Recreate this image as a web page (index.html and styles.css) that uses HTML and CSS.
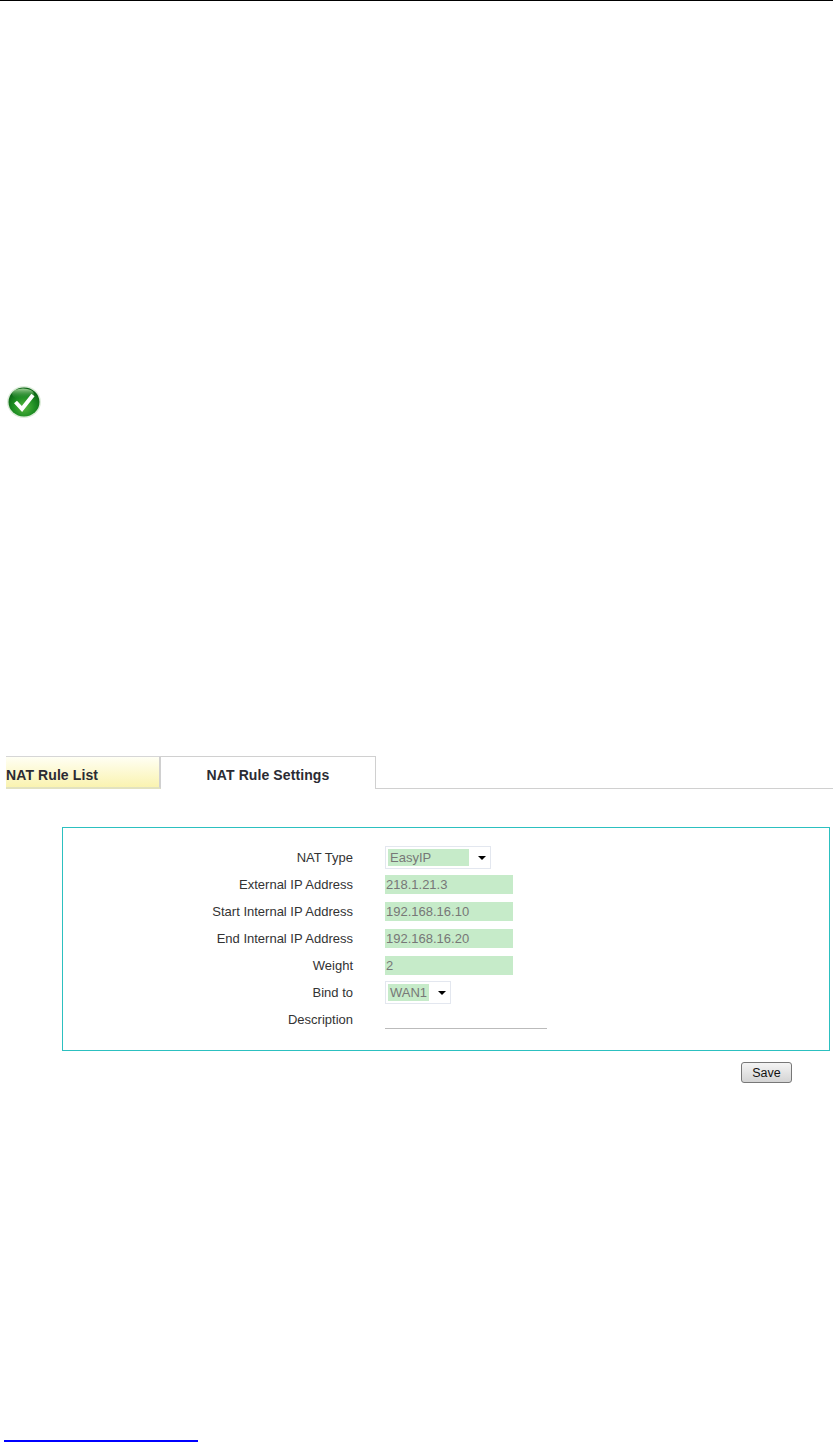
FILE: index.html
```html
<!DOCTYPE html>
<html lang="en">
<head>
<meta charset="utf-8">
<title>NAT Rule Settings</title>
<link rel="stylesheet" href="styles.css">
</head>
<body>
<div class="top-rule"></div>
<svg class="ok-icon" width="34" height="32" viewBox="0 0 34 32" aria-hidden="true">
  <defs>
    <radialGradient id="g" cx="50%" cy="68%" r="62%">
      <stop offset="0" stop-color="#58b83f"/>
      <stop offset="0.55" stop-color="#1f8f24"/>
      <stop offset="1" stop-color="#0a6314"/>
    </radialGradient>
    <linearGradient id="s" x1="0" y1="0" x2="0" y2="1">
      <stop offset="0" stop-color="#a5d59b"/>
      <stop offset="1" stop-color="#1f8c28" stop-opacity="0"/>
    </linearGradient>
  </defs>
  <ellipse cx="17" cy="16" rx="17" ry="16" fill="#dcecd9"/>
  <ellipse cx="17" cy="16" rx="15.5" ry="14.5" fill="url(#g)"/>
  <ellipse cx="16" cy="8" rx="11" ry="5.5" fill="url(#s)"/>
  <path d="M8.5 16l6.5 7L26 9" fill="none" stroke="#fff" stroke-width="4" stroke-linejoin="miter"/>
</svg>
<nav class="tabs">
  <div class="tab tab-off">NAT Rule List</div>
  <div class="tab tab-on">NAT Rule Settings</div>
  <div class="tab-rest"></div>
</nav>
<main class="panel">
  <div class="form">
    <div class="label">NAT Type</div>
    <div class="select select-wide"><span class="select-value">EasyIP</span><span class="arrow"></span></div>
    <div class="label">External IP Address</div>
    <div class="input">218.1.21.3</div>
    <div class="label">Start Internal IP Address</div>
    <div class="input">192.168.16.10</div>
    <div class="label">End Internal IP Address</div>
    <div class="input">192.168.16.20</div>
    <div class="label">Weight</div>
    <div class="input">2</div>
    <div class="label">Bind to</div>
    <div class="select select-narrow"><span class="select-value">WAN1</span><span class="arrow"></span></div>
    <div class="label">Description</div>
    <div class="desc-input"></div>
  </div>
</main>
<div class="actions"><button class="save" type="button">Save</button></div>
<div class="spacer"></div>
<div class="footnote-rule"></div>
</body>
</html>
```
FILE: styles.css
```css
html, body { margin: 0; padding: 0; background: #fff; }
body {
  width: 833px;
  height: 1442px;
  overflow: hidden;
  display: flex;
  flex-direction: column;
  font-family: "Liberation Sans", Arial, sans-serif;
  font-size: 13px;
  color: #333;
}
.top-rule { height: 1px; background: #000; flex: none; }
.ok-icon { display: block; flex: none; margin: 385px 0 0 7px; filter: blur(0.5px); }
.tabs { display: flex; flex: none; margin: 338px 0 0 6px; height: 33px; }
.tab {
  box-sizing: border-box;
  height: 33px;
  font-weight: bold;
  font-size: 14px;
  letter-spacing: 0.1px;
  line-height: 36px;
  color: #2b2b33;
}
.tab-off {
  width: 155px;
  border-top: 1px solid #d6d6d6;
  border-right: 2px solid #d0d0d0;
  border-bottom: 2px solid #e2e2c0;
  background: linear-gradient(#fffff4, #faf3b0);
}
.tab-on {
  width: 215px;
  border-top: 1px solid #d0d0d0;
  border-right: 1px solid #d0d0d0;
  text-align: center;
  background: #fff;
}
.tab-rest { flex: 1; border-bottom: 1px solid #d0d0d0; }
.panel {
  box-sizing: border-box;
  flex: none;
  width: 768px;
  height: 224px;
  margin: 38px 0 0 62px;
  border: 1px solid #2cc0c0;
  padding: 16px 0 0 0;
}
.form {
  display: grid;
  grid-template-columns: 290px 1fr;
  column-gap: 32px;
  grid-auto-rows: 27px;
  align-items: center;
  justify-items: start;
}
.label { justify-self: end; color: #333; white-space: nowrap; }
.input {
  box-sizing: border-box;
  width: 128px;
  height: 19px;
  padding-left: 1px;
  line-height: 19px;
  background: #c6ebc9;
  color: #777;
}
.select {
  box-sizing: border-box;
  height: 23px;
  padding: 2px;
  border: 1px solid #e3e7ef;
  display: flex;
  align-items: center;
  background: #fff;
}
.select-wide { width: 106px; }
.select-wide .select-value { width: 81px; }
.select-narrow { width: 66px; }
.select-narrow .select-value { width: 41px; }
.select-value {
  box-sizing: border-box;
  height: 17px;
  line-height: 17px;
  padding-left: 2px;
  background: #c6ebc9;
  color: #777;
}
.arrow {
  width: 0;
  height: 0;
  margin-left: 9px;
  border-left: 4px solid transparent;
  border-right: 4px solid transparent;
  border-top: 4px solid #000;
}
.desc-input {
  box-sizing: border-box;
  align-self: start;
  width: 162px;
  height: 23px;
  border-bottom: 1px solid #bbb;
}
.actions { flex: none; display: flex; justify-content: flex-end; margin: 11px 41px 0 0; }
.save {
  box-sizing: border-box;
  width: 51px;
  height: 21px;
  padding: 0;
  border: 1px solid #777;
  border-radius: 3px;
  background: linear-gradient(#f4f4f4, #d4d4d4);
  font-family: "Liberation Sans", Arial, sans-serif;
  font-size: 12.5px;
  color: #111;
}
.spacer { flex: 1; }
.footnote-rule { flex: none; width: 194px; height: 2px; margin-left: 4px; background: #00f; }
```
